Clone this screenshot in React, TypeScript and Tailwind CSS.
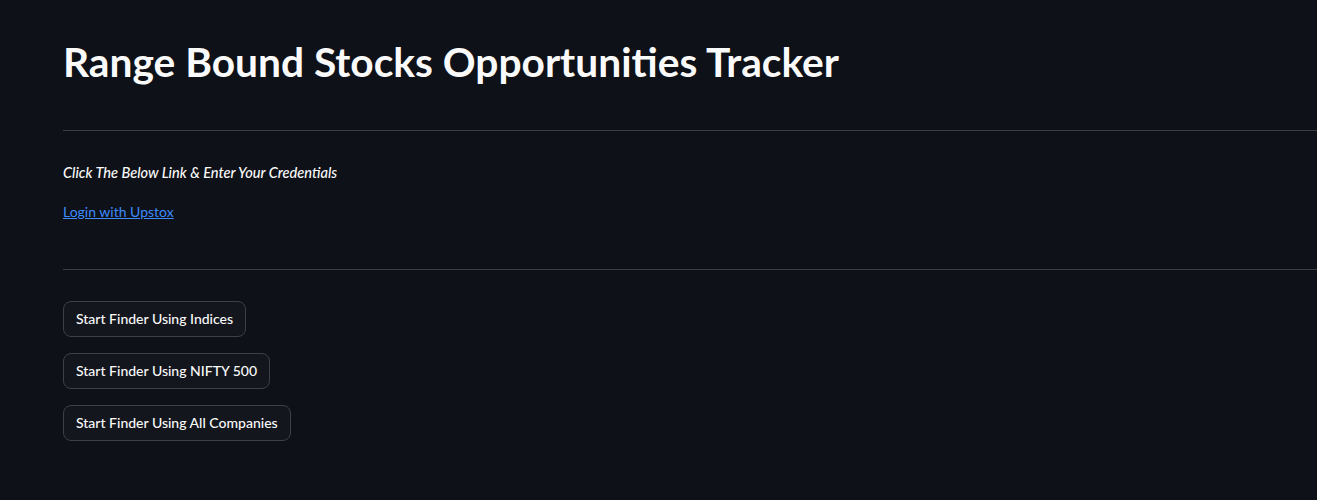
import React from 'react'

const buttons = ['Start Finder Using Indices', 'Start Finder Using NIFTY 500', 'Start Finder Using All Companies']

export default function App() {
  return (
    <div
      className="min-h-[500px] w-full overflow-hidden bg-[#0e1117] pl-[63px] text-[#fafafa]"
      style={{ fontFamily: 'Lato, "Noto Sans", sans-serif' }}
    >
      <h1 className="pt-[40px] text-[40.7px] font-bold leading-[44px] whitespace-nowrap">
        Range Bound Stocks Opportunities Tracker
      </h1>
      <hr className="mt-[46px] w-[1400px] border-0 border-t border-[#3b3d43]" />
      <p className="mt-[32px] text-[14.6px] italic font-medium leading-[20px]">
        Click The Below Link &amp; Enter Your Credentials
      </p>
      <a href="#" className="mt-[19px] block w-fit text-[14px] leading-[20px] text-[#3d8bfd] underline">
        Login with Upstox
      </a>
      <hr className="mt-[47px] w-[1400px] border-0 border-t border-[#3b3d43]" />
      <div className="mt-[31px] flex flex-col items-start gap-[16px]">
        {buttons.map((b) => (
          <button
            key={b}
            className="h-[36px] rounded-[8px] border border-[#3d4047] bg-[#13161d] px-[12px] text-[14px] font-medium leading-[20px] text-[#fafafa]"
          >
            {b}
          </button>
        ))}
      </div>
    </div>
  )
}
